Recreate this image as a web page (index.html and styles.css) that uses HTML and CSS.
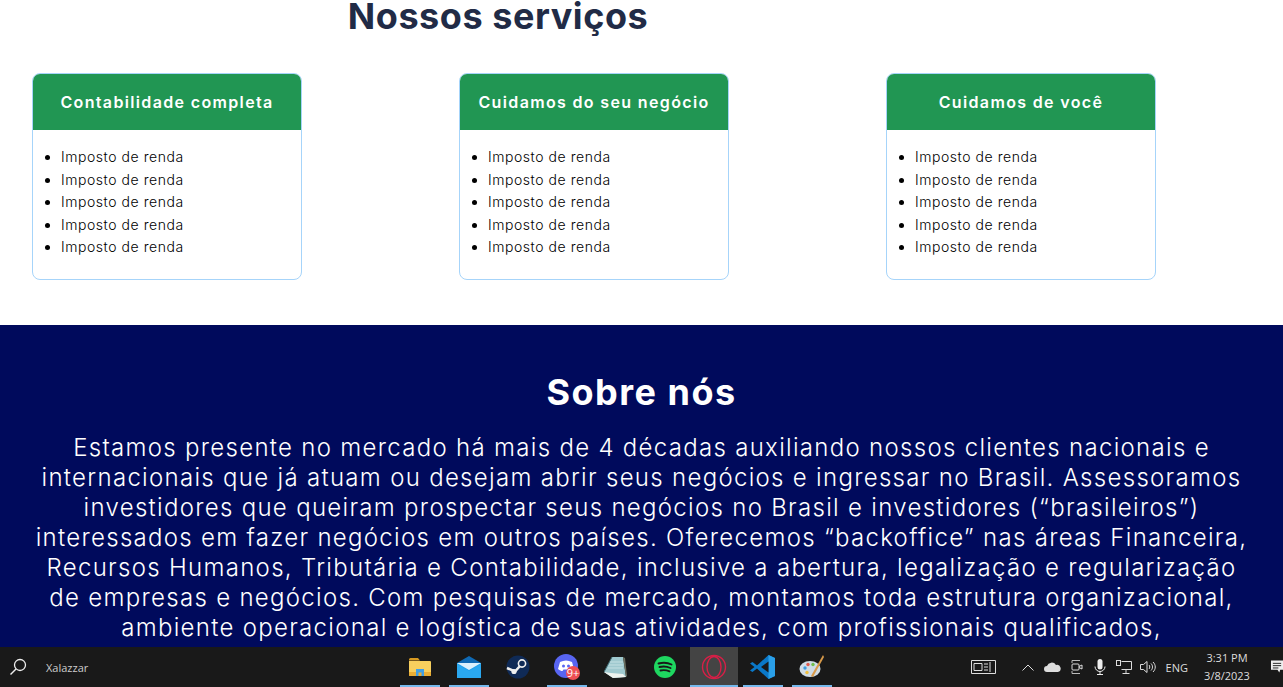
FILE: index.html
```html
<!DOCTYPE html>
<html lang="en">
<head>
    <meta charset="UTF-8">
    <meta name="viewport" content="width=device-width, initial-scale=1.0">
    <title>Nossos serviços</title>
    <link rel="stylesheet" href="styles.css">
</head>
<body>
    <main class="page">
        <section class="services">
            <h2 class="services-title">Nossos serviços</h2>
            <div class="cards">
                <div class="card">
                    <div class="card-header">Contabilidade completa</div>
                    <ul class="card-list">
                        <li>Imposto de renda</li>
                        <li>Imposto de renda</li>
                        <li>Imposto de renda</li>
                        <li>Imposto de renda</li>
                        <li>Imposto de renda</li>
                    </ul>
                </div>
                <div class="card">
                    <div class="card-header">Cuidamos do seu negócio</div>
                    <ul class="card-list">
                        <li>Imposto de renda</li>
                        <li>Imposto de renda</li>
                        <li>Imposto de renda</li>
                        <li>Imposto de renda</li>
                        <li>Imposto de renda</li>
                    </ul>
                </div>
                <div class="card">
                    <div class="card-header">Cuidamos de você</div>
                    <ul class="card-list">
                        <li>Imposto de renda</li>
                        <li>Imposto de renda</li>
                        <li>Imposto de renda</li>
                        <li>Imposto de renda</li>
                        <li>Imposto de renda</li>
                    </ul>
                </div>
            </div>
        </section>
        <section class="about">
            <h2 class="about-title">Sobre nós</h2>
            <p class="about-text">Estamos presente no mercado há mais de 4 décadas auxiliando nossos clientes nacionais e<br>
            internacionais que já atuam ou desejam abrir seus negócios e ingressar no Brasil. Assessoramos<br>
            investidores que queiram prospectar seus negócios no Brasil e investidores (“brasileiros”)<br>
            interessados em fazer negócios em outros países. Oferecemos “backoffice” nas áreas Financeira,<br>
            Recursos Humanos, Tributária e Contabilidade, inclusive a abertura, legalização e regularização<br>
            de empresas e negócios. Com pesquisas de mercado, montamos toda estrutura organizacional,<br>
            ambiente operacional e logística de suas atividades, com profissionais qualificados,</p>
        </section>
    </main>
    <footer class="taskbar">
        <div class="task-search">
            <svg viewBox="0 0 18 18" width="18" height="18"><circle cx="11" cy="7" r="5.5" fill="none" stroke="#eee" stroke-width="1.3"/><path d="M7 11 L1.5 16.5" stroke="#eee" stroke-width="1.5"/></svg>
            <span>Xalazzar</span>
        </div>
        <div class="task-apps">
            <div class="app open">
                <svg viewBox="0 0 22 18" width="22" height="18"><path d="M0 1.500A1.500 1.500 0 0 1 1.500 0H9l2 2.500H0z" fill="#d79a22"/><path d="M0 3h21a1 1 0 0 1 1 1v13a1 1 0 0 1-1 1H1a1 1 0 0 1-1-1z" fill="#f7cf5e"/><path d="M0 14h22v3a1 1 0 0 1-1 1H1a1 1 0 0 1-1-1z" fill="#e9ae35"/><path d="M7 11h8v7h-2.500v-3.500h-3V18H7z" fill="#3f9fe6"/></svg>
            </div>
            <div class="app open">
                <svg viewBox="0 0 24 22" width="24" height="22"><path d="M0 7 12 0l12 7z" fill="#0f69b4"/><path d="M0 7h24v15H0z" fill="#21a0ec"/><path d="M0 7h24L12 14z" fill="#dcf0fc"/><path d="M0 22 0 8l12 7 12-7v14z" fill="#2aa8f0"/></svg>
            </div>
            <div class="app">
                <svg viewBox="0 0 24 24" width="24" height="24"><circle cx="12" cy="12" r="11.500" fill="#0f2a56"/><circle cx="16" cy="8.500" r="3.600" fill="none" stroke="#eee" stroke-width="1.600"/><path d="M1 13 9 16.500 14 11" fill="none" stroke="#eee" stroke-width="2.600"/><circle cx="8" cy="16.500" r="2.600" fill="#eee"/></svg>
            </div>
            <div class="app open">
                <svg viewBox="0 0 26 26" width="26" height="26"><circle cx="12" cy="12" r="12" fill="#5865f2"/><path d="M6 8c4-2 8-2 12 0l2 7c-2 1.500-3 2-4.500 2l-1-1.500h-5L8.500 17C7 17 6 16.500 4 15z" fill="#fff"/><circle cx="9.500" cy="12" r="1.500" fill="#5865f2"/><circle cx="14.500" cy="12" r="1.500" fill="#5865f2"/><circle cx="19" cy="19" r="7" fill="#ee4f55"/><text x="19" y="23" class="badge-text">9+</text></svg>
            </div>
            <div class="app">
                <svg viewBox="0 0 24 23" width="24" height="23"><path d="M8 1h11l3 20-13 1L0 16z" fill="#9fc9cf"/><path d="M6 6h13M5 9h14M4 12h15" stroke="#c4e0e3" fill="none"/><path d="M8 1 0 16" stroke="#3f6a72"/><path d="M0 16 9 22l13-1-3-3-12-1z" fill="#eef2ee"/><path d="M19 1l3 20 1-1-2-18z" fill="#6b6f60"/></svg>
            </div>
            <div class="app">
                <svg viewBox="0 0 24 24" width="24" height="24"><circle cx="12" cy="12" r="11" fill="#1ed760"/><path d="M5.500 8.500c4-1 9-1 13 1M6.500 12c3.500-.8 7.500-.6 11 1M7.500 15.500c3-.6 6-.4 9 .8" fill="none" stroke="#191919" stroke-width="1.900" stroke-linecap="round"/></svg>
            </div>
            <div class="app active">
                <svg viewBox="0 0 26 26" width="26" height="26"><circle cx="13" cy="13" r="11.500" fill="none" stroke="#d81f47" stroke-width="1.400"/><ellipse cx="13" cy="13" rx="7" ry="10.500" fill="none" stroke="#d81f47" stroke-width="1.400"/></svg>
            </div>
            <div class="app open">
                <svg viewBox="0 0 26 26" width="26" height="26"><path d="M18.500 1 25 4v18l-6.500 3L7 14.500 2.500 18 0 16.500 4.500 13 0 9.500 2.500 8 7 11.500z" fill="#0a78c8"/><path d="M18.500 1 25 4v18l-6.500 3z" fill="#2a9fe8"/><path d="M18.500 7.500v11L11 13z" fill="#191919"/></svg>
            </div>
            <div class="app open">
                <svg viewBox="0 0 26 26" width="26" height="26"><ellipse cx="11" cy="15" rx="10.500" ry="8" fill="#cfdce6"/><circle cx="6" cy="14" r="1.700" fill="#3d9be0"/><circle cx="9" cy="10.500" r="1.700" fill="#e05a4e"/><circle cx="14" cy="10.500" r="1.700" fill="#6fbf4b"/><circle cx="8" cy="18.500" r="1.700" fill="#f0c040"/><path d="M24 1 25 3 14 23l-2-1z" fill="#d89a4a"/></svg>
            </div>
        </div>
        <div class="task-tray">
            <svg class="tray-news" viewBox="0 0 25 16" width="25" height="16"><path d="M.5 1.500h24v13H.5z" fill="none" stroke="#ddd"/><path d="M3 4.500h8v7H3z" fill="none" stroke="#ddd"/><path d="M13 5h4M13 8h4M13 11h4M19 3v10" stroke="#ddd" fill="none"/></svg>
            <svg viewBox="0 0 12 7" width="12" height="7"><path d="M.5 6.500 6 1l5.500 5.500" fill="none" stroke="#ddd"/></svg>
            <svg viewBox="0 0 17 10" width="17" height="10"><path d="M3 10a3 3 0 0 1 0-6 5 5 0 0 1 9-1 3.500 3.500 0 0 1 2 7z" fill="#ddd"/></svg>
            <svg viewBox="0 0 12 16" width="12" height="16"><path d="M1 4V1.500h8M1 12v2.500h8" fill="none" stroke="#bbb"/><rect x="1" y="5" width="7" height="6" rx="1" fill="none" stroke="#ddd"/><path d="M8 7.500 11 6v4L8 8.500" fill="none" stroke="#ddd"/></svg>
            <svg class="tray-mic" viewBox="0 0 12 16" width="12" height="16"><rect x="3.500" y="0" width="5" height="10.500" rx="2.500" fill="#eee"/><path d="M1 7.500a5 5 0 0 0 10 0M6 12.500V15M3 15.500h6" fill="none" stroke="#eee"/></svg>
            <svg viewBox="0 0 16 15" width="16" height="15"><path d="M5.500 1.500h10v8h-10M10 9.500v4M6.500 13.500h7" fill="none" stroke="#ddd"/><rect x=".5" y=".5" width="4" height="5" fill="none" stroke="#ddd"/></svg>
            <svg class="tray-volume" viewBox="0 0 16 14" width="16" height="14"><path d="M.5 4.500h3L7 1.500v11l-3.500-3h-3zM9 5c1 1 1 3 0 4M11 3.500c2 2 2 5 0 7M13 2c3 3 3 7 0 10" fill="none" stroke="#ddd"/></svg>
            <span class="tray-lang">ENG</span>
            <div class="tray-clock">
                <span>3:31 PM</span>
                <span>3/8/2023</span>
            </div>
            <svg class="tray-notify" viewBox="0 0 13 15" width="13" height="15"><path d="M0 0h13v10h-3l-1 3-2-3H0z" fill="#eee"/><path d="M2 3h9M2 5.500h9M2 8h6" stroke="#191919"/></svg>
        </div>
    </footer>
</body>
</html>
```

FILE: styles.css
```css
html, body {
    height: 100%;
}
body {
    display: flex;
    flex-direction: column;
    height: 687px;
    margin: 0;
    overflow: hidden;
    background-color: #ffffff;
    font-family: Inter, 'Open Sans', sans-serif;
}
.page {
    flex: 1;
    min-height: 0;
    overflow: hidden;
}
.services {
    height: 325px;
    box-sizing: border-box;
}
.services-title {
    width: 996px;
    height: 73px;
    margin: 0;
    font-size: 36px;
    line-height: 32px;
    font-weight: 700;
    letter-spacing: 0.55px;
    text-align: center;
    color: #212b46;
}
.cards {
    display: flex;
    gap: 157px;
    padding-left: 32px;
}
.card {
    width: 270px;
    height: 207px;
    box-sizing: border-box;
    border: 1px solid #a6d4fa;
    border-radius: 8px;
    overflow: hidden;
    background-color: #ffffff;
}
.card-header {
    height: 56px;
    background-color: #219653;
    color: #ffffff;
    font-size: 16px;
    font-weight: 600;
    letter-spacing: 1.35px;
    line-height: 56px;
    text-align: center;
}
.card-list {
    margin: 16px 0 0;
    padding-left: 28px;
    font-size: 14px;
    font-weight: 300;
    line-height: 22.5px;
    letter-spacing: 0.55px;
    color: #000000;
}
.about {
    height: 322px;
    box-sizing: border-box;
    padding-top: 45px;
    overflow: hidden;
    background-color: #000a5c;
    color: #ffffff;
    text-align: center;
}
.about-title {
    margin: 0 0 19px;
    font-size: 36px;
    line-height: 44px;
    font-weight: 700;
    letter-spacing: 1.5px;
}
.about-text {
    margin: 0;
    font-size: 24px;
    font-weight: 300;
    line-height: 30px;
    letter-spacing: 1.3px;
    white-space: nowrap;
}
.taskbar {
    display: flex;
    height: 40px;
    flex-shrink: 0;
    background-color: #191919;
    color: #dddddd;
    font-family: 'Open Sans', sans-serif;
    font-size: 11px;
}
.task-search {
    display: flex;
    align-items: center;
    gap: 19px;
    width: 396px;
    padding-left: 9px;
    box-sizing: border-box;
    color: #cccccc;
}
.task-apps {
    display: flex;
    gap: 1px;
}
.app {
    display: flex;
    align-items: center;
    justify-content: center;
    width: 48px;
    height: 40px;
}
.app.open {
    background: linear-gradient(#76b9ed, #76b9ed) center bottom / 40px 2px no-repeat;
}
.app.active {
    background: linear-gradient(#76b9ed, #76b9ed) center bottom / 100% 2px no-repeat, #444444;
}
.badge-text {
    font-size: 11px;
    fill: #ffffff;
    text-anchor: middle;
}
.task-tray {
    display: flex;
    align-items: center;
    gap: 10px;
    margin-left: auto;
}
.tray-news {
    margin-right: 16px;
}
.tray-mic {
    margin-left: 1px;
}
.tray-volume {
    margin-left: -2px;
}
.tray-clock {
    display: flex;
    flex-direction: column;
    align-items: center;
    width: 50px;
    line-height: 18px;
    margin-left: 4px;
}
.tray-notify {
    width: 12px;
    margin-left: 9px;
}
```
